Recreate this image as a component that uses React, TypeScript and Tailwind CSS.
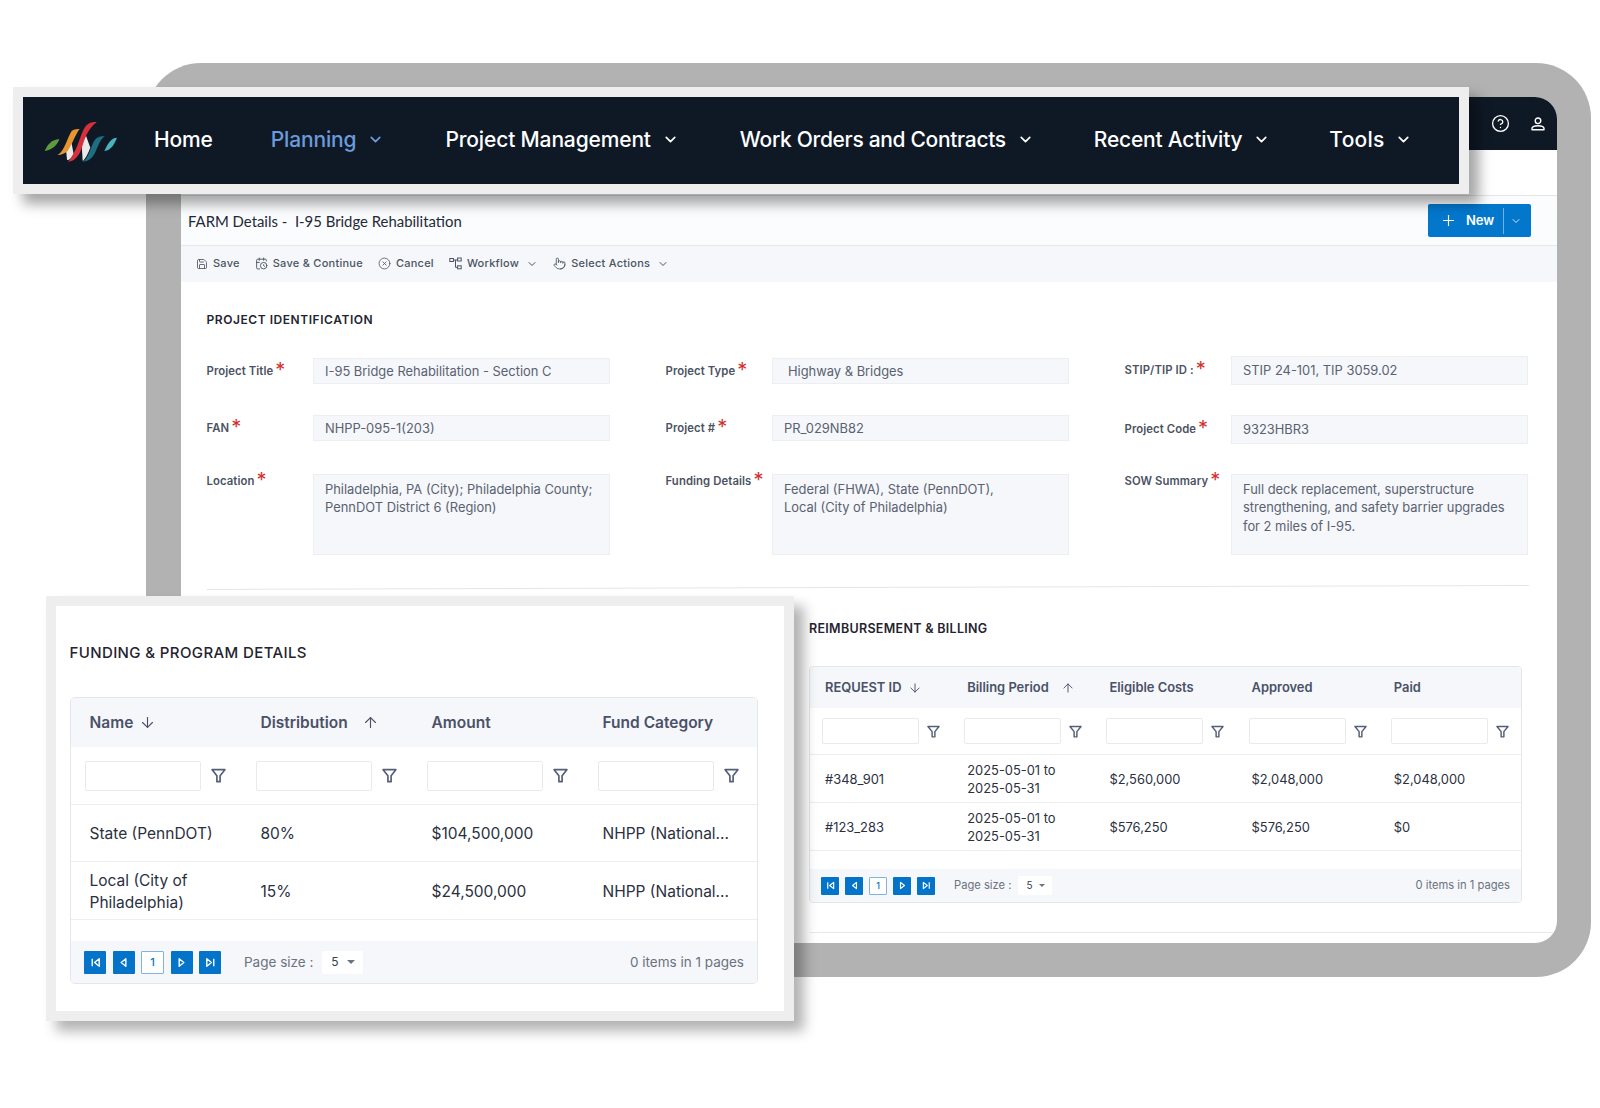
import React from "react";
import { Save, CalendarClock, CircleX, Pointer, ChevronDown, Plus, CircleHelp, Settings, ArrowDown, ArrowUp } from "lucide-react";

const inter = "font-['Inter','Liberation_Sans',sans-serif]";

function Logo() {
  return (
    <svg width="110" height="70" viewBox="0 0 330 210" className="shrink-0">
      <path d="M42 136C50 118 62 104 85 102C80 118 66 134 42 138Z" fill="#5f9a3c" />
      <path d="M104 122L108 164C116 168 122 156 128 148L120 106Z" fill="#e9e9e9" />
      <path d="M80 150C100 140 108 100 122 78C130 72 140 72 146 72C135 85 125 115 112 135C105 145 90 150 80 150Z" fill="#e8952e" />
      <path d="M152 118L155 168C165 160 172 142 178 128L165 92Z" fill="#e9e9e9" />
      <path d="M110 170C125 170 140 160 150 135C160 110 165 75 197 52C190 50 175 52 165 62C150 80 145 115 130 140C125 150 118 165 110 170Z" fill="#d8303a" />
      <path d="M155 170C180 170 190 150 198 130C205 112 212 100 221 94C210 92 195 96 188 110C178 130 172 160 155 170Z" fill="#1f6d80" />
      <path d="M220 138C240 136 250 118 258 98C242 98 232 112 220 138Z" fill="#46b3bd" />
    </svg>
  );
}

function NavItem({ label, active, className }: { label: string; active?: boolean; className?: string }) {
  return (
    <div className={`flex items-center gap-[11px] whitespace-nowrap ${active ? "text-[#6b9bdb]" : "text-white"} ${className ?? ""}`}>
      <span>{label}</span>
      <ChevronDown size={17} strokeWidth={2.4} />
    </div>
  );
}

function Funnel({ size }: { size: number }) {
  return (
    <svg width={size} height={size} viewBox="0 0 16 16" fill="none" stroke="#555f78" strokeWidth="1.8" strokeLinejoin="round" className="shrink-0">
      <path d="M1.2 1.8h13.6L9.7 8.2V14.6H6.3V8.2Z" />
    </svg>
  );
}

function UserIcon() {
  return (
    <svg width="14" height="14" viewBox="0 0 14 14" fill="none" stroke="white" strokeWidth="1.4" strokeLinejoin="round">
      <circle cx="7" cy="3.8" r="2.8" />
      <path d="M1 12.8v-1.2C1 9.6 3.4 8.8 7 8.8s6 .8 6 2.8v1.2Z" />
    </svg>
  );
}

function WorkflowIcon() {
  return (
    <svg width="13" height="13" viewBox="0 0 13 13" fill="none" stroke="currentColor" strokeWidth="1">
      <rect x="0.8" y="1.5" width="3.6" height="3" />
      <rect x="8.6" y="1" width="3.6" height="3" />
      <rect x="8.6" y="8.8" width="3.6" height="3" />
      <path d="M4.4 3h4.2M6.5 3v7.3h2.1" />
    </svg>
  );
}

function Pager({ kind, size }: { kind: "first" | "prev" | "next" | "last"; size: number }) {
  const d = {
    first: <><path d="M3.5 3v8" /><path d="M11 3 6 7l5 4Z" /></>,
    prev: <path d="M9.5 3 4.5 7l5 4Z" />,
    next: <path d="M4.5 3l5 4-5 4Z" />,
    last: <><path d="M10.5 3v8" /><path d="M3 3l5 4-5 4Z" /></>,
  }[kind];
  return (
    <svg width={size} height={size} viewBox="0 0 14 14" fill="none" stroke="white" strokeWidth="1.5" strokeLinejoin="round">
      {d}
    </svg>
  );
}

function Field({ label, value, labelPad, pad, tall, box }: { label: string; value: string[]; labelPad: string; pad?: boolean; tall?: boolean; box: string }) {
  return (
    <div className="flex items-start">
      <div className={`w-[106.5px] flex items-start ${labelPad}`}>
        <span className="text-[11.3px] leading-[14px] font-semibold text-[#4b5263] tracking-[0.1px]">{label}</span>
        <span className="text-[20px] leading-[14px] text-[#d32f2f] ml-[2px] mt-[-1px]">*</span>
      </div>
      <div className={`w-[297px] bg-[#f5f7fb] border border-[#eceef2] text-[12.9px] leading-[18.3px] text-[#5a6270] ${pad ? "pl-[15px]" : "pl-[11px]"} ${tall ? "pt-[6px]" : "flex items-center pt-[2px]"} ${box}`}>
        <div>
          {value.map((v) => (
            <div key={v}>{v}</div>
          ))}
        </div>
      </div>
    </div>
  );
}

function ToolItem({ icon, label, chevron }: { icon: React.ReactNode; label: string; chevron?: boolean }) {
  return (
    <div className="flex items-center gap-[5px]">
      {icon}
      <span>{label}</span>
      {chevron && <ChevronDown size={12} strokeWidth={2} className="ml-[2px]" />}
    </div>
  );
}

function SmallTable() {
  const cols = [
    { h: "REQUEST ID", arrow: "down" },
    { h: "Billing Period", arrow: "up" },
    { h: "Eligible Costs" },
    { h: "Approved" },
    { h: "Paid" },
  ];
  const rows = [
    ["#348_901", "2025-05-01 to\n2025-05-31", "$2,560,000", "$2,048,000", "$2,048,000"],
    ["#123_283", "2025-05-01 to\n2025-05-31", "$576,250", "$576,250", "$0"],
  ];
  return (
    <div className="w-[713px] h-[237px] border border-[#e3e6ea] rounded-[4px] overflow-hidden flex flex-col">
      <div className="grid grid-cols-5 h-[41px] pt-[1px] bg-[#f5f7fa] text-[12.9px] font-semibold text-[#4a5168]">
        {cols.map((c) => (
          <div key={c.h} className="pl-[15px] flex items-center">
            <span>{c.h}</span>
            {c.arrow === "down" && <ArrowDown size={14} strokeWidth={1.6} className="ml-[6px]" />}
            {c.arrow === "up" && <ArrowUp size={14} strokeWidth={1.6} className="ml-[12px]" />}
          </div>
        ))}
      </div>
      <div className="grid grid-cols-5 h-[47px] border-b border-[#eceef1]">
        {cols.map((c) => (
          <div key={c.h} className="pl-[12px] flex items-center gap-[8px]">
            <div className="w-[97px] h-[26px] bg-white border border-[#e8eaee] rounded-[2px]" />
            <Funnel size={13} />
          </div>
        ))}
      </div>
      {rows.map((r) => (
        <div key={r[0]} className="grid grid-cols-5 h-[48px] pt-[3px] border-b border-[#eceef1] text-[12.9px] leading-[18.3px] text-[#2a3040]">
          {r.map((v, i) => (
            <div key={i} className="pl-[15px] flex items-center whitespace-pre-line">{v}</div>
          ))}
        </div>
      ))}
      <div className="h-[18px]" />
      <div className="flex-1 bg-[#f5f7fa] flex items-center pl-[11px] pr-[11px] text-[11.2px] text-[#6b7280]">
        <div className="flex items-center gap-[6px]">
          <div className="w-[18px] h-[18px] bg-[#0374c9] rounded-[1px] flex items-center justify-center"><Pager kind="first" size={11} /></div>
          <div className="w-[18px] h-[18px] bg-[#0374c9] rounded-[1px] flex items-center justify-center"><Pager kind="prev" size={11} /></div>
          <div className="w-[18px] h-[18px] bg-white border border-[#7fb4de] rounded-[1px] flex items-center justify-center text-[9px] font-medium text-[#0374c9]">1</div>
          <div className="w-[18px] h-[18px] bg-[#0374c9] rounded-[1px] flex items-center justify-center"><Pager kind="next" size={11} /></div>
          <div className="w-[18px] h-[18px] bg-[#0374c9] rounded-[1px] flex items-center justify-center"><Pager kind="last" size={11} /></div>
        </div>
        <span className="ml-[19px]">Page size :</span>
        <div className="ml-[7px] w-[34px] h-[19px] bg-white rounded-[2px] flex items-center pl-[8px] gap-[6px] text-[10px] text-[#374151]">
          <span>5</span>
          <span className="w-0 h-0 border-x-[3px] border-x-transparent border-t-[3px] border-t-[#6b7280]" />
        </div>
        <span className="ml-auto">0 items in 1 pages</span>
      </div>
    </div>
  );
}

function BigTable() {
  const cols = [
    { h: "Name", arrow: "down" },
    { h: "Distribution", arrow: "up" },
    { h: "Amount" },
    { h: "Fund Category" },
  ];
  const rows = [
    { c: ["State (PennDOT)", "80%", "$104,500,000", "NHPP (National..."], h: "h-[57px]" },
    { c: ["Local (City of\nPhiladelphia)", "15%", "$24,500,000", "NHPP (National..."], h: "h-[58px]" },
  ];
  const grid = "grid grid-cols-[171px_171px_171px_1fr]";
  return (
    <div className="w-[688px] h-[287px] border border-[#e3e6ea] rounded-[5px] overflow-hidden flex flex-col">
      <div className={`${grid} h-[49px] bg-[#f5f7fa] text-[15.5px] font-semibold text-[#4a5168]`}>
        {cols.map((c) => (
          <div key={c.h} className="pl-[18.5px] flex items-center">
            <span>{c.h}</span>
            {c.arrow === "down" && <ArrowDown size={17} strokeWidth={1.6} className="ml-[6px]" />}
            {c.arrow === "up" && <ArrowUp size={17} strokeWidth={1.6} className="ml-[14px]" />}
          </div>
        ))}
      </div>
      <div className={`${grid} h-[58px] border-b border-[#eceef1]`}>
        {cols.map((c) => (
          <div key={c.h} className="pl-[14px] flex items-center gap-[10px]">
            <div className="w-[116px] h-[30px] bg-white border border-[#e8eaee] rounded-[2px]" />
            <Funnel size={15} />
          </div>
        ))}
      </div>
      {rows.map((r) => (
        <div key={r.c[0]} className={`${grid} ${r.h} pt-[2px] border-b border-[#eceef1] text-[15.5px] leading-[22px] text-[#2a3040]`}>
          {r.c.map((v, i) => (
            <div key={i} className="pl-[18.5px] flex items-center whitespace-pre-line">{v}</div>
          ))}
        </div>
      ))}
      <div className="h-[21px]" />
      <div className="flex-1 bg-[#f5f7fa] flex items-center pl-[13px] pr-[13px] text-[13.5px] text-[#6b7280]">
        <div className="flex items-center gap-[6.5px]">
          <div className="w-[22px] h-[23px] bg-[#0374c9] rounded-[1px] flex items-center justify-center"><Pager kind="first" size={13} /></div>
          <div className="w-[22px] h-[23px] bg-[#0374c9] rounded-[1px] flex items-center justify-center"><Pager kind="prev" size={13} /></div>
          <div className="w-[23px] h-[23px] bg-white border border-[#7fb4de] rounded-[1px] flex items-center justify-center text-[11px] font-medium text-[#0374c9]">1</div>
          <div className="w-[22px] h-[23px] bg-[#0374c9] rounded-[1px] flex items-center justify-center"><Pager kind="next" size={13} /></div>
          <div className="w-[22px] h-[23px] bg-[#0374c9] rounded-[1px] flex items-center justify-center"><Pager kind="last" size={13} /></div>
        </div>
        <span className="ml-[23px]">Page size :</span>
        <div className="ml-[9px] w-[41px] h-[23px] bg-white rounded-[2px] flex items-center pl-[9px] gap-[8px] text-[12px] text-[#374151]">
          <span>5</span>
          <span className="w-0 h-0 border-x-[4px] border-x-transparent border-t-[4px] border-t-[#6b7280]" />
        </div>
        <span className="ml-auto">0 items in 1 pages</span>
      </div>
    </div>
  );
}

export default function App() {
  return (
    <div className={`relative w-[1600px] h-[1108px] bg-white overflow-hidden pt-[63px] pl-[146px] ${inter}`}>
      {/* Grey device frame */}
      <div className="w-[1445px] h-[914px] bg-[#b2b2b2] rounded-[55px] pt-[34px] pl-[35px]">
        <div className="w-[1376px] h-[846px] bg-white rounded-[22px] overflow-hidden flex flex-col">
          <div className="h-[53px] shrink-0 bg-[#0f1926] flex items-center justify-end pr-[12px] text-white">
            <Settings size={17} strokeWidth={1.8} className="mr-[26px]" />
            <CircleHelp size={19} strokeWidth={1.7} />
            <div className="ml-[21px] w-[14px]"><UserIcon /></div>
          </div>
          <div className="h-[46px] shrink-0 border-b border-[#e3e5e8]" />
          <div className="h-[50px] shrink-0 bg-[#fbfcfd] border-b border-[#e6e8eb] flex items-center justify-between pl-[7px] pr-[26px]">
            <span className="font-['Lato','Liberation_Sans',sans-serif] text-[14.9px] pt-[1px] text-[#1f2937] whitespace-pre">FARM Details -  I-95 Bridge Rehabilitation</span>
            <div className="w-[103px] h-[33px] bg-[#0377cc] rounded-[2px] flex items-center text-white text-[13px] font-semibold">
              <Plus size={17} strokeWidth={1.6} className="ml-[12px]" />
              <span className="ml-[9px]">New</span>
              <div className="ml-[9px] w-px h-[26px] bg-[#6fb2e3]" />
              <ChevronDown size={12} strokeWidth={1.6} className="ml-[6px] text-white" />
            </div>
          </div>
          <div className="h-[36px] shrink-0 bg-[#f5f7fa] flex items-center pb-[1px] pl-[15px] gap-[15px] text-[11px] font-medium text-[#4b5563] tracking-[0.25px]">
            <ToolItem icon={<Save size={12} strokeWidth={1.7} />} label="Save" />
            <ToolItem icon={<CalendarClock size={13} strokeWidth={1.7} />} label="Save & Continue" />
            <ToolItem icon={<CircleX size={13} strokeWidth={1.5} />} label="Cancel" />
            <ToolItem icon={<WorkflowIcon />} label="Workflow" chevron />
            <ToolItem icon={<Pointer size={13} strokeWidth={1.6} />} label="Select Actions" chevron />
          </div>

          <div className="pl-[25.5px] pr-[24.5px]">
            <h3 className="mt-[31px] text-[12px] leading-[14px] font-semibold text-[#1f2430] tracking-[0.55px]">PROJECT IDENTIFICATION</h3>
            <div className="mt-[29px] grid grid-cols-[403.5px_403.5px_403.5px] grid-rows-[59px_59px_81px] gap-x-[55.5px]">
              <Field label="Project Title" labelPad="pt-[8px]" box="mt-[2px] h-[26px]" value={["I-95 Bridge Rehabilitation - Section C"]} />
              <Field label="Project Type" labelPad="pt-[8px]" box="mt-[2px] h-[26px]" value={["Highway & Bridges"]} pad />
              <Field label="STIP/TIP ID :" labelPad="pt-[7px]" box="h-[29px]" value={["STIP 24-101, TIP 3059.02"]} />
              <Field label="FAN" labelPad="pt-[6px]" box="h-[26px]" value={["NHPP-095-1(203)"]} />
              <Field label="Project #" labelPad="pt-[6px]" box="h-[26px]" value={["PR_029NB82"]} />
              <Field label="Project Code" labelPad="pt-[7px]" box="h-[29px]" value={["9323HBR3"]} />
              <Field tall label="Location" labelPad="pt-0" box="h-[81px]" value={["Philadelphia, PA (City); Philadelphia County;", "PennDOT District 6 (Region)"]} />
              <Field tall label="Funding Details" labelPad="pt-0" box="h-[81px]" value={["Federal (FHWA), State (PennDOT),", "Local (City of Philadelphia)"]} />
              <Field tall label="SOW Summary" labelPad="pt-0" box="h-[81px]" value={["Full deck replacement, superstructure", "strengthening, and safety barrier upgrades", "for 2 miles of I-95."]} />
            </div>
            <div className="mt-[32px] w-[1322px] h-px bg-[#e3e5e8] rotate-[-0.17deg]" />
            <div className="ml-[602.5px]">
              <h3 className="mt-[34px] text-[12.5px] leading-[14px] font-semibold text-[#1f2430] tracking-[0.3px]">REIMBURSEMENT &amp; BILLING</h3>
              <div className="mt-[30px]">
                <SmallTable />
              </div>
            </div>
            <div className="mt-[29px] ml-[603px] w-[748px] h-px bg-[#e6e8eb]" />
          </div>
        </div>
      </div>

      {/* Floating navigation call-out */}
      <div className="absolute left-[13px] top-[87px] w-[1456px] h-[107px] border-[10px] border-[#eeeeee] shadow-[10px_10px_12px_rgba(0,0,0,0.35)]">
        <div className="w-full h-full bg-[#0f1926] flex items-center pb-[2px] text-[21px] tracking-[-0.15px] font-medium">
          <div className="ml-[8px]">
            <Logo />
          </div>
          <span className="ml-[13px] text-white">Home</span>
          <div className="ml-[58px] flex items-center gap-[61px]">
            <NavItem label="Planning" active />
            <NavItem label="Project Management" />
            <NavItem label="Work Orders and Contracts" className="tracking-[-0.32px]" />
            <NavItem label="Recent Activity" className="-ml-[1px] tracking-[-0.22px]" />
            <NavItem label="Tools" className="-ml-[2px] tracking-[0.2px]" />
          </div>
        </div>
      </div>

      {/* Floating funding call-out */}
      <div className="absolute left-[46px] top-[596px] w-[748px] h-[425px] border-[10px] border-[#eeeeee] bg-white shadow-[10px_10px_12px_rgba(0,0,0,0.3)] pl-[14px]">
        <h3 className="mt-[40px] -ml-[0.5px] text-[15px] leading-[14px] font-medium text-[#1f2430] tracking-[0.38px]">FUNDING &amp; PROGRAM DETAILS</h3>
        <div className="mt-[37px]">
          <BigTable />
        </div>
      </div>
    </div>
  );
}
